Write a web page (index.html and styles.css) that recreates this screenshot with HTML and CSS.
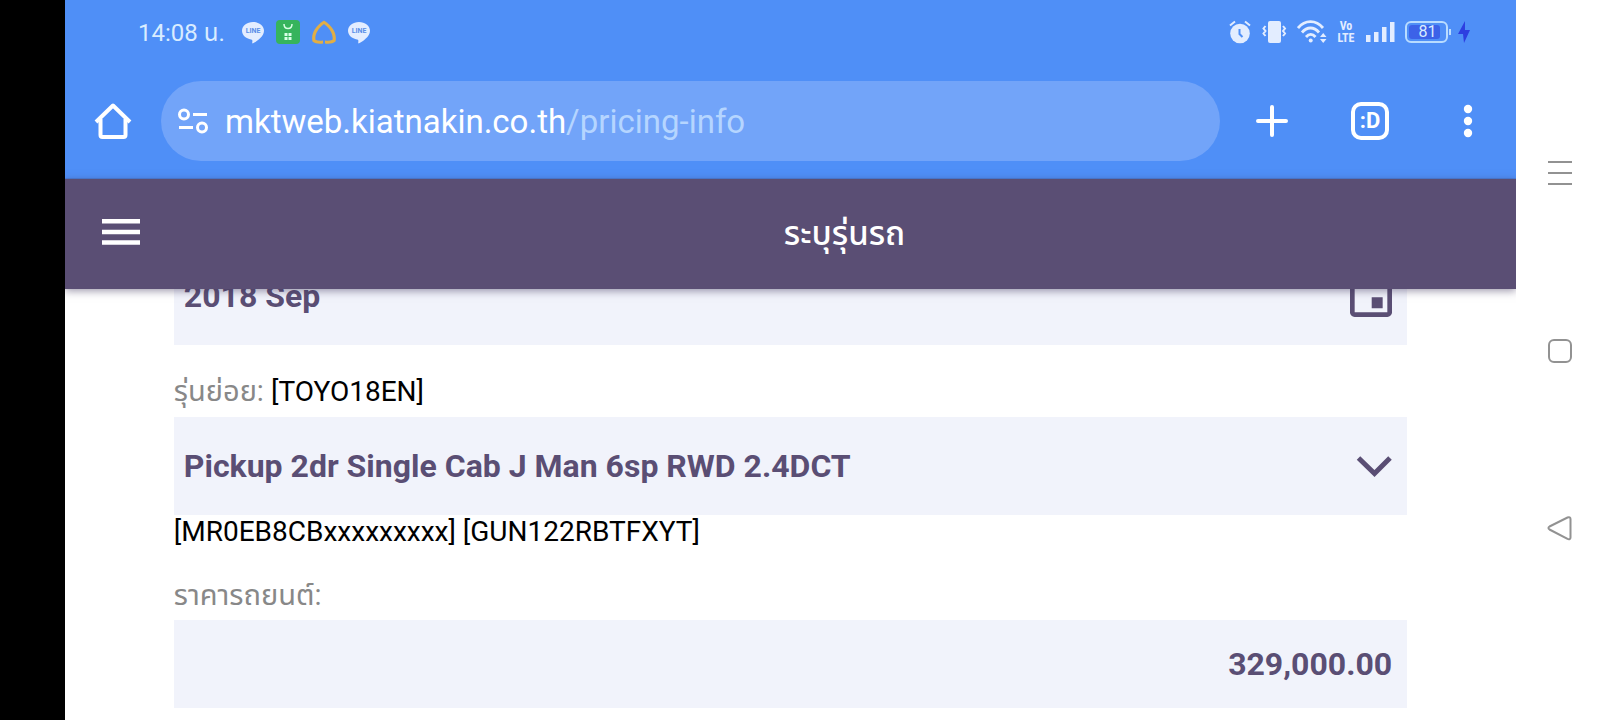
FILE: index.html
```html
<!DOCTYPE html>
<html lang="th">
<head>
    <meta charset="UTF-8">
    <meta name="viewport" content="width=device-width, initial-scale=1.0">
    <title>ระบุรุ่นรถ</title>
    <link rel="stylesheet" href="styles.css">
</head>
<body>
    <div class="cutout"></div>
    <div class="screen">
        <div class="status-bar">
            <span class="clock">14:08 น.</span>
            <div class="notifications">
                <svg class="line-icon" width="22" height="24" viewBox="0 0 22 24">
                    <path d="M11 2C5 2 0 5.900 0 10.800c0 4.300 3.900 7.900 9.100 8.600 1.600.3 1.400 1.200 1.100 3.400 0 .5.300.8.900.5 3.300-1.700 10.900-6.500 10.900-12.500C22 5.900 17 2 11 2z" fill="#e3edff"/>
                    <text x="11" y="13" text-anchor="middle">LINE</text>
                </svg>
                <svg width="24" height="24" viewBox="0 0 24 24">
                    <rect width="24" height="24" rx="4" fill="#36b45c"/>
                    <path d="M8 4c0 6 8 6 8 0" fill="none" stroke="#d8ffe6" stroke-width="1.500"/>
                    <path d="M8.500 13h3v3h-3zM12.500 13h3v3h-3zM8.500 17h3v3h-3zM12.500 17h3v3h-3z" fill="#d8ffe6"/>
                </svg>
                <svg width="24" height="24" viewBox="0 0 24 24">
                    <path d="M11 23.500c-4 .6-8 .1-10.500-2C-1 15 2 7 12 .5 22 7 25 15 23.500 21.500c-2.500 2.100-6.500 2.600-10.500 2V20.500c3 .4 5.500.2 7.500-.8.8-4.500-1.500-10.500-8.500-15.800-7 5.300-9.300 11.300-8.500 15.800 2 1 4.500 1.200 7.500.8z" fill="#e2ae45"/>
                </svg>
                <svg class="line-icon" width="22" height="24" viewBox="0 0 22 24">
                    <path d="M11 2C5 2 0 5.900 0 10.800c0 4.300 3.900 7.900 9.100 8.600 1.600.3 1.400 1.200 1.100 3.400 0 .5.300.8.900.5 3.300-1.700 10.900-6.500 10.900-12.500C22 5.900 17 2 11 2z" fill="#e3edff"/>
                    <text x="11" y="13" text-anchor="middle">LINE</text>
                </svg>
            </div>
            <div class="indicators">
                <svg width="22" height="24" viewBox="0 0 22 24">
                    <circle cx="11" cy="13.500" r="9.800" fill="#e3edff"/>
                    <path d="M1 5.500 6 1.500M21 5.500 16 1.500" stroke="#e3edff" stroke-width="2"/>
                    <path d="M10.500 9v5l3 3" fill="none" stroke="#4f8ff7" stroke-width="2"/>
                </svg>
                <svg width="26" height="24" viewBox="0 0 26 24">
                    <rect x="7" y="1" width="13" height="22" rx="2" fill="#e3edff"/>
                    <path d="M4.500 6 2.500 8.500 4.500 11 2.500 13.500 4.500 16M22 6l2 2.500-2 2.500 2 2.500-2 2.500" fill="none" stroke="#e3edff" stroke-width="2"/>
                </svg>
                <svg width="30" height="24" viewBox="0 0 30 24">
                    <g fill="none" stroke="#e3edff" stroke-width="2.800">
                        <path d="M1 8C8-.5 19-.5 26 8"/>
                        <path d="M5 12.500c5-6 12-6 17 0"/>
                        <path d="M9 17c3-3.600 6.500-3.600 9.500 0"/>
                    </g>
                    <circle cx="13.700" cy="20.500" r="2" fill="#e3edff"/>
                    <path d="M23 17l3.200-4 3.300 4zM23 19h6.500l-3.300 4z" fill="#e3edff"/>
                </svg>
                <svg class="volte" width="18" height="24" viewBox="0 0 18 24">
                    <text x="9" y="10" text-anchor="middle">Vo</text>
                    <text x="9" y="22" text-anchor="middle">LTE</text>
                </svg>
                <svg width="30" height="24" viewBox="0 0 30 24">
                    <path d="M1 15h4.500v7H1zM9 12h4.500v10H9zM17 7h4.500v15H17zM25 2h4.500v20H25z" fill="#e3edff"/>
                </svg>
                <div class="battery">
                    <span class="level">81</span>
                </div>
                <svg class="bolt" width="12" height="24" viewBox="1 0 12 24">
                    <path d="M8 1 1 14h5l1 9 6-13H8z" fill="#2d3fe0"/>
                </svg>
            </div>
        </div>

        <div class="toolbar">
            <button class="icon-button" aria-label="Home">
                <svg width="38" height="38" viewBox="0 0 38 38" fill="none" stroke="#fff" stroke-width="4">
                    <path d="M2 20 19 3.500 36 20" stroke-linejoin="round"/>
                    <path d="M6.500 17v16c0 1.500.5 2 2 2h21c1.500 0 2-.5 2-2V17"/>
                </svg>
            </button>
            <div class="omnibox">
                <button class="site-info" aria-label="Site information">
                    <svg width="30" height="26" viewBox="0 0 30 26" fill="none" stroke="#fff" stroke-width="3">
                        <circle cx="6" cy="6.500" r="4.500"/>
                        <path d="M15 6.500h14M1 19.500h14"/>
                        <circle cx="24" cy="19.500" r="4.500"/>
                    </svg>
                </button>
                <button class="address">mktweb.kiatnakin.co.th<span class="path">/pricing-info</span></button>
            </div>
            <div class="actions">
                <button class="icon-button" aria-label="New tab">
                    <svg width="38" height="38" viewBox="0 0 38 38" stroke="#fff" stroke-width="4" stroke-linecap="round">
                        <path d="M19 5v28M5 19h28"/>
                    </svg>
                </button>
                <button class="icon-button tabs" aria-label="Tabs">:D</button>
                <button class="icon-button" aria-label="Menu">
                    <svg width="38" height="38" viewBox="0 0 38 38" fill="#fff">
                        <circle cx="19" cy="7" r="4.200"/>
                        <circle cx="19" cy="19" r="4.200"/>
                        <circle cx="19" cy="31" r="4.200"/>
                    </svg>
                </button>
            </div>
        </div>

        <header class="app-header">
            <button class="menu-button" aria-label="เมนู">
                <svg width="38" height="30" viewBox="0 0 38 30" fill="#fff">
                    <path d="M0 0h38v4.500H0zM0 10.700h38v4.500H0zM0 21.300h38v4.500H0z"/>
                </svg>
            </button>
            <h1>ระบุรุ่นรถ</h1>
        </header>

        <main class="content">
            <form class="pricing-form">
                <div class="field">
                    <input type="text" aria-label="วันที่" value="2018 Sep" readonly>
                    <svg class="calendar" width="56" height="56" viewBox="0 0 24 24" fill="#5a4e74">
                        <path d="M17 12.500h-4.700v4.700H17zM16 1v2H8V1H6v2H5c-1.110 0-2 .9-2 2v14c0 1.100.89 2 2 2h14c1.100 0 2-.9 2-2V5c0-1.100-.9-2-2-2h-1V1h-2zm3 18H5V8h14v11z"/>
                    </svg>
                </div>

                <label for="model">รุ่นย่อย: <span class="code">[TOYO18EN]</span></label>
                <div class="field">
                    <select id="model">
                        <option>Pickup 2dr Single Cab J Man 6sp RWD 2.4DCT</option>
                    </select>
                    <svg class="chevron" width="36" height="22" viewBox="0 0 36 22" fill="none" stroke="#5a4e74" stroke-width="5">
                        <path d="M2.500 3 18.500 18.500 34 3"/>
                    </svg>
                </div>
                <p class="code note">[MR0EB8CBxxxxxxxxx] [GUN122RBTFXYT]</p>

                <label for="price">ราคารถยนต์:</label>
                <div class="field price">
                    <input type="text" id="price" value="329,000.00" readonly>
                </div>
            </form>
        </main>
    </div>

    <nav class="nav-bar">
        <button aria-label="Recents">
            <svg width="26" height="26" viewBox="0 0 26 26"><path d="M1 2h24M1 13h24M1 24h24"/></svg>
        </button>
        <button aria-label="Home screen">
            <svg width="26" height="26" viewBox="0 0 26 26"><rect x="2" y="2" width="22" height="22" rx="5"/></svg>
        </button>
        <button aria-label="Back">
            <svg width="26" height="26" viewBox="0 0 26 26"><path d="M2.500 10.500 20.500 1.500c1.800-.8 3 0 3 1.500v18.400c0 1.500-1.200 2.300-3 1.500L2.500 13.500c-1.400-.8-1.400-2.200 0-3z"/></svg>
        </button>
    </nav>
</body>
</html>
```

FILE: styles.css
```css
* {
    box-sizing: border-box;
}
body {
    margin: 0;
    height: 100vh;
    display: flex;
    overflow: hidden;
    background-color: #fff;
    font-family: Roboto, "Noto Sans Thai", sans-serif;
}
button {
    padding: 0;
    border: 0;
    background: none;
    color: inherit;
    font-family: inherit;
}
svg {
    display: block;
}
.cutout {
    width: 65px;
    flex-shrink: 0;
    background-color: #000;
}
.screen {
    flex: 1;
    min-width: 0;
    display: flex;
    flex-direction: column;
    overflow: hidden;
}

/* status bar */
.status-bar {
    height: 64px;
    padding: 0 46px 0 73px;
    display: flex;
    align-items: center;
    background-color: #4f8ff7;
    color: #d9ecff;
}
.clock {
    font-size: 24px;
    line-height: 34px;
    padding-top: 2px;
}
.notifications {
    display: flex;
    gap: 12px;
    margin-left: 17px;
}
.line-icon text {
    font-size: 7px;
    font-weight: bold;
    fill: #5a8fe8;
}
.indicators {
    display: flex;
    align-items: center;
    gap: 10px;
    margin-left: auto;
}
.volte text {
    font-family: "Roboto Condensed", "Liberation Sans Narrow", Roboto, sans-serif;
    font-size: 12px;
    font-weight: bold;
    line-height: 12px;
    fill: #e3edff;
}
.battery {
    position: relative;
    width: 43px;
    height: 22px;
    padding: 2px;
    border: 2px solid #b9dcff;
    border-radius: 6px;
}
.battery::after {
    content: "";
    position: absolute;
    top: 6px;
    right: -5px;
    width: 2px;
    height: 6px;
    background-color: #b9dcff;
}
.level {
    display: block;
    width: 31px;
    padding-left: 6px;
    border-radius: 3px;
    background-color: #3c62e8;
    font-size: 16px;
    line-height: 14px;
    text-align: center;
}

/* browser toolbar */
.toolbar {
    height: 115px;
    padding: 0 29px;
    display: flex;
    align-items: center;
    background-color: #4f8ff7;
    border-bottom: 1px solid #4a7fdc;
    color: #fff;
}
.icon-button {
    width: 38px;
    height: 38px;
    flex-shrink: 0;
}
.omnibox {
    flex: 1;
    height: 80px;
    margin-left: 29px;
    padding-left: 17px;
    display: flex;
    align-items: center;
    gap: 17px;
    border-radius: 40px;
    background-color: #72a4f9;
}
.address {
    font-size: 33px;
}
.path {
    color: #b5d5ff;
}
.actions {
    display: flex;
    gap: 60px;
    margin-left: 33px;
}
.tabs {
    border: 4px solid #fff;
    border-radius: 10px;
    font-size: 22px;
    line-height: 28px;
    font-weight: bold;
}

/* app header */
.app-header {
    position: relative;
    z-index: 1;
    height: 110px;
    flex-shrink: 0;
    padding: 0 37px;
    display: flex;
    align-items: center;
    background-color: #5a4e74;
    box-shadow: 0 2px 8px rgba(60, 50, 90, 0.5);
    color: #fff;
}
h1 {
    flex: 1;
    margin: 0;
    padding: 2px 0 0 70px;
    font-size: 33px;
    font-weight: 500;
    text-align: center;
}

/* form, scrolled a little way under the header */
.content {
    flex: 1;
    min-height: 0;
    overflow: hidden;
}
.pricing-form {
    width: 85%;
    margin: -42px auto 0;
}
.field {
    height: 98px;
    display: flex;
    align-items: center;
    background-color: #f1f3fb;
}
.field input,
.field select {
    flex: 1;
    min-width: 0;
    height: 100%;
    padding: 0 10px;
    border: 0;
    background: none;
    appearance: none;
    color: #5a4e74;
    font-family: inherit;
    font-size: 32px;
    font-weight: bold;
}
.calendar {
    margin-right: 8px;
}
.chevron {
    margin-right: 15px;
}
label {
    display: block;
    margin: 26px 0 5px;
    color: #888;
    font-size: 29px;
    line-height: 40px;
}
.code {
    color: #000;
    font-size: 28px;
}
.note {
    margin: 0;
    line-height: 34px;
}
.price {
    height: 88px;
}
.price input {
    padding-right: 15px;
    text-align: right;
}

/* system navigation */
.nav-bar {
    width: 88px;
    flex-shrink: 0;
    padding: 160px 0 178px;
    display: flex;
    flex-direction: column;
    align-items: center;
    justify-content: space-between;
    background-color: #fff;
}
.nav-bar svg {
    fill: none;
    stroke: #929292;
    stroke-width: 2;
}
```
